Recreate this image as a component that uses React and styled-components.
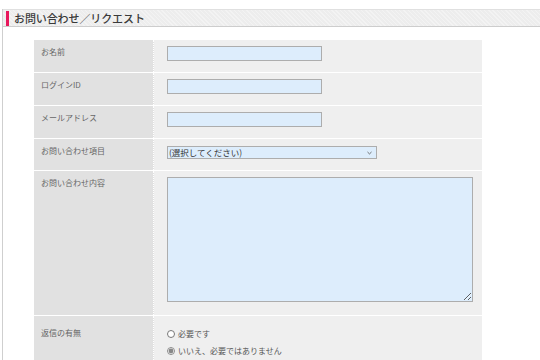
import React, { useState } from "react";
import styled, { createGlobalStyle } from "styled-components";

const GlobalStyle = createGlobalStyle`
  html, body {
    margin: 0;
    padding: 0;
    background: #ffffff;
    font-family: "Noto Sans CJK JP", "Noto Sans", sans-serif;
    color: #666;
  }
`;

const fields = [
  { label: "お名前", type: "text" },
  { label: "ログインID", type: "text" },
  { label: "メールアドレス", type: "text" },
];

const App = () => {
  const [reply, setReply] = useState("no");

  return (
    <>
      <GlobalStyle />
      <Page>
        <TitleBar>
          <Accent />
          <Title>お問い合わせ／リクエスト</Title>
        </TitleBar>
        <Body>
          <FormTable>
            {fields.map((f) => (
              <Row key={f.label}>
                <Label>{f.label}</Label>
                <Cell>
                  <TextInput type={f.type} />
                </Cell>
              </Row>
            ))}
            <Row>
              <Label>お問い合わせ項目</Label>
              <Cell $pad="7px">
                <SelectWrap>
                  <Select defaultValue="">
                    <option value="">(選択してください)</option>
                  </Select>
                  <Chevron viewBox="0 0 6 4">
                    <path d="M0.6 0.8 L3 3.1 L5.4 0.8" />
                  </Chevron>
                </SelectWrap>
              </Cell>
            </Row>
            <Row>
              <Label>お問い合わせ内容</Label>
              <Cell $pad="6px" $bottom="13px">
                <TextArea />
              </Cell>
            </Row>
            <Row $last>
              <Label $top="11px">返信の有無</Label>
              <Cell $pad="9px">
                <RadioLine>
                  <Radio
                    type="radio"
                    name="reply"
                    checked={reply === "yes"}
                    onChange={() => setReply("yes")}
                  />
                  必要です
                </RadioLine>
                <RadioLine>
                  <Radio
                    type="radio"
                    name="reply"
                    checked={reply === "no"}
                    onChange={() => setReply("no")}
                  />
                  いいえ、必要ではありません
                </RadioLine>
              </Cell>
            </Row>
          </FormTable>
        </Body>
      </Page>
    </>
  );
};

const Page = styled.div`
  margin: 9px 0 0 2px;
  border-left: 1px solid #cfcfcf;
  height: 351px;
  display: flex;
  flex-direction: column;
`;

const TitleBar = styled.div`
  display: flex;
  align-items: center;
  gap: 5px;
  height: 19px;
  padding-left: 3px;
  background-color: #ededed;
  background-image: repeating-linear-gradient(
    45deg,
    rgba(255, 255, 255, 0.35) 0 1px,
    transparent 1px 3px
  );
  border-top: 1px solid #e0e0e0;
  border-bottom: 1px solid #cdcdcd;
`;

const Accent = styled.span`
  width: 3px;
  height: 15px;
  background: #e8185c;
`;

const Title = styled.h1`
  margin: 0;
  font-size: 11px;
  font-weight: 500;
  color: #3a3a3a;
  letter-spacing: -0.1px;
`;

const Body = styled.div`
  padding: 13px 0 0 31px;
`;

const FormTable = styled.div`
  width: 448px;
  display: flex;
  flex-direction: column;
`;

const Row = styled.div`
  display: grid;
  grid-template-columns: 120px 1fr;
  border-bottom: ${({ $last }) => ($last ? "none" : "1px dotted #ffffff")};
`;

const Label = styled.div`
  background: #e1e1e1;
  border-right: 1px dotted #ffffff;
  padding: ${({ $top }) => $top || "6px"} 7px 0;
  font-size: 8px;
  line-height: 12px;
  color: #666;
`;

const Cell = styled.div`
  background: #efefef;
  padding: ${({ $pad }) => $pad || "6px"} 0 ${({ $bottom }) => $bottom || "11px"} 13px;
  display: flex;
  flex-direction: column;
`;

const TextInput = styled.input`
  box-sizing: border-box;
  width: 155px;
  height: 15px;
  margin: 0;
  padding: 0 3px;
  background: #ddedfc;
  border: 1px solid #adadad;
  border-radius: 0;
  font-size: 8px;
  outline: none;
`;

const SelectWrap = styled.div`
  position: relative;
  width: 210px;
  height: 13px;
`;

const Select = styled.select`
  appearance: none;
  display: block;
  box-sizing: border-box;
  width: 100%;
  height: 100%;
  margin: 0;
  padding: 0 1px;
  background: #ddedfc;
  border: 1px solid #adadad;
  border-radius: 0;
  font-family: "Noto Sans CJK JP", sans-serif;
  font-size: 8.5px;
  line-height: 11px;
  color: #333;
  outline: none;
`;

const Chevron = styled.svg`
  position: absolute;
  right: 5px;
  top: 5px;
  width: 5px;
  height: 4px;
  fill: none;
  stroke: #555;
  stroke-width: 1;
  pointer-events: none;
`;

const TextArea = styled.textarea`
  box-sizing: border-box;
  width: 306px;
  height: 125px;
  margin: 0;
  background: #ddedfc;
  border: 1px solid #adadad;
  border-radius: 0;
  outline: none;
`;

const RadioLine = styled.label`
  display: flex;
  align-items: center;
  gap: 1px;
  height: 17px;
  font-size: 8px;
  color: #555;
`;

const Radio = styled.input`
  width: 8px;
  height: 8px;
  margin: 0 2px 0 0;
  accent-color: #888;
`;

export default App;
